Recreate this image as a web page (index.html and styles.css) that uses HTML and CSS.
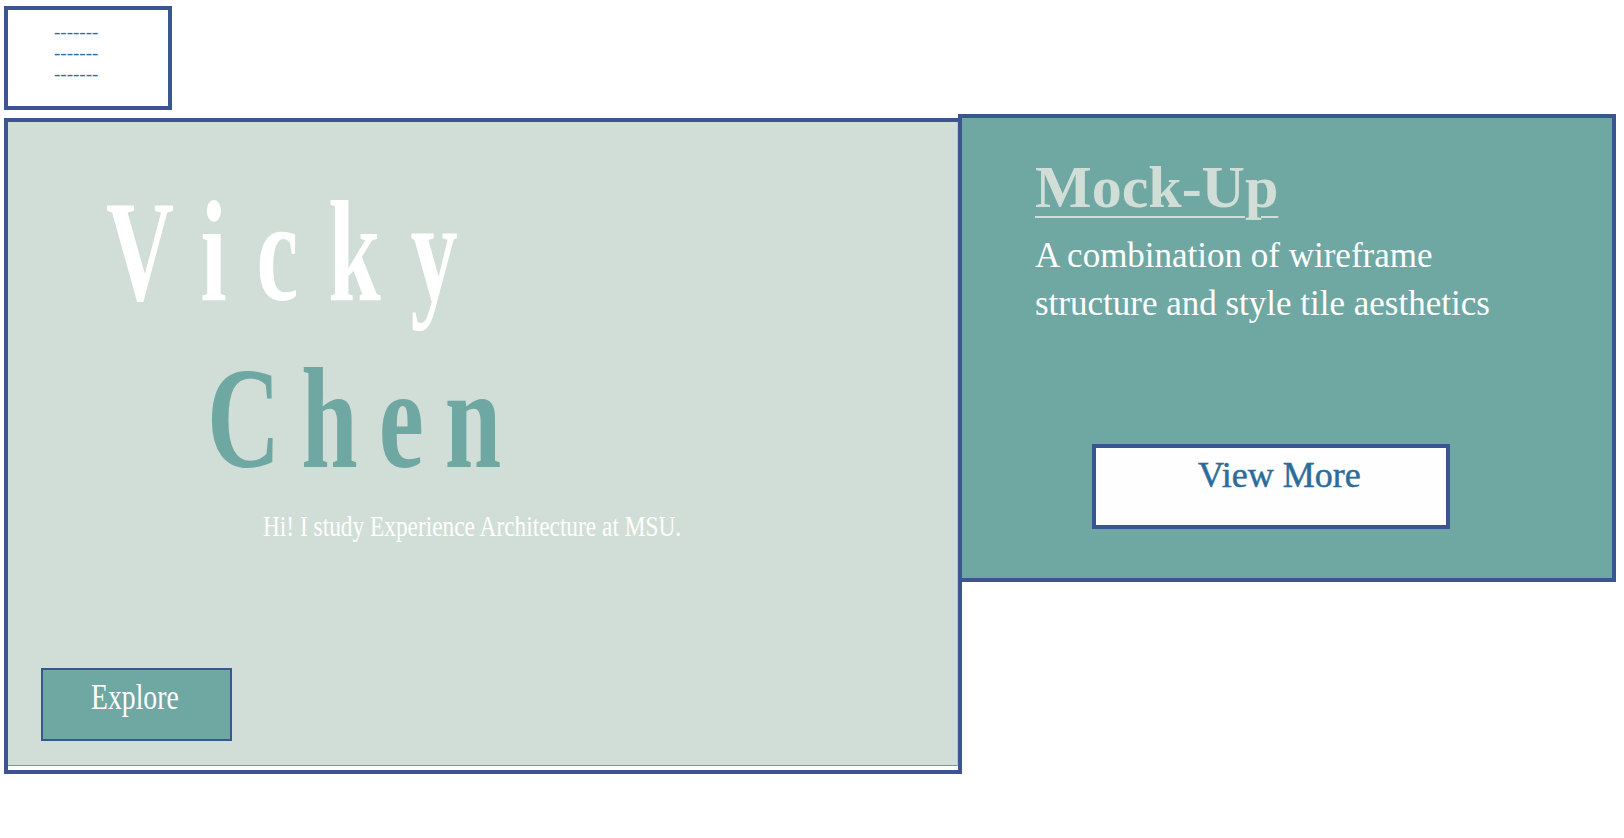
FILE: index.html
```html
<!DOCTYPE html>
<html lang="en">
<head>
<meta charset="utf-8">
<title>Vicky Chen</title>
<link rel="stylesheet" href="styles.css">
</head>
<body>
<div class="page">
  <nav class="menu">
    <a class="menu-link" href="#">-------</a>
    <a class="menu-link" href="#">-------</a>
    <a class="menu-link" href="#">-------</a>
  </nav>
  <div class="row">
    <section class="hero">
      <div class="hero-inner">
        <h1 class="name name-first"><span class="narrow">Vicky</span></h1>
        <h1 class="name name-last"><span class="narrow">Chen</span></h1>
        <p class="intro"><span class="narrow">Hi! I study Experience Architecture at MSU.</span></p>
        <a class="explore" href="#"><span class="narrow">Explore</span></a>
      </div>
    </section>
    <section class="card">
      <h2 class="card-title">Mock-Up</h2>
      <p class="card-text">A combination of wireframe<br>structure and style tile aesthetics</p>
      <a class="more" href="#">View More</a>
    </section>
  </div>
</div>
</body>
</html>
```

FILE: styles.css
```css
* { box-sizing: border-box; }

body {
  margin: 0;
  background: #ffffff;
  font-family: "Liberation Serif", "Times New Roman", serif;
}

.page {
  padding: 6px 0 0 4px;
}

.narrow {
  display: inline-block;
  white-space: nowrap;
  transform-origin: 0 0;
}

/* top-left menu */
.menu {
  width: 168px;
  height: 104px;
  border: 4px solid #3a558f;
  display: flex;
  flex-direction: column;
  padding: 11px 0 0 46px;
}

.menu-link {
  font-size: 19px;
  line-height: 21px;
  color: #2f6fa0;
  text-decoration: none;
}

/* main row */
.row {
  display: flex;
  align-items: flex-start;
  margin-top: 8px;
}

.hero {
  width: 958px;
  height: 656px;
  border: 4px solid #3a558f;
  background: #ffffff;
  flex: none;
}

.hero-inner {
  height: 644px;
  background: #d1ded7;
  border-bottom: 1px solid #7d90ad;
  border-right: 1px solid #b9c8c6;
  display: flex;
  flex-direction: column;
  align-items: flex-start;
}

.name {
  margin: 0;
  font-size: 145px;
  line-height: 145px;
  font-weight: bold;
}

.name-first {
  margin-top: 57px;
  padding-left: 98px;
  color: #ffffff;
  letter-spacing: 46px;
}

.name-first .narrow { transform: scaleX(0.65); }

.name-last {
  margin-top: 22px;
  padding-left: 199px;
  color: #6fa7a3;
  letter-spacing: 30px;
}

.name-last .narrow { transform: scaleX(0.70); }

.intro {
  margin: 21px 0 0;
  padding-left: 255px;
  font-size: 29px;
  line-height: 29px;
  color: #ffffff;
}

.intro .narrow { transform: scaleX(0.805); }

.explore {
  margin-top: 127px;
  margin-left: 33px;
  width: 191px;
  height: 73px;
  border: 2px solid #3a558f;
  background: #6fa7a3;
  color: #ffffff;
  font-size: 36px;
  line-height: 36px;
  padding: 9px 0 0 48px;
  text-decoration: none;
}

.explore .narrow { transform: scaleX(0.77); }

/* right card */
.card {
  flex: none;
  width: 658px;
  height: 468px;
  margin-left: -4px;
  margin-top: -4px;
  border: 4px solid #3a558f;
  background: #6fa7a3;
  padding: 39px 0 0 73px;
  display: flex;
  flex-direction: column;
  align-items: flex-start;
}

.card-title {
  margin: 0;
  font-size: 60px;
  line-height: 60px;
  font-weight: bold;
  color: #d1ded7;
  text-decoration: underline;
  text-decoration-thickness: 2px;
  text-underline-offset: 9px;
}

.card-text {
  margin: 15px 0 0;
  font-size: 35px;
  line-height: 48px;
  color: #ffffff;
}

.more {
  margin-top: 116px;
  margin-left: 57px;
  width: 358px;
  height: 85px;
  border: 4px solid #3a558f;
  background: #fdfefd;
  color: #2d6c9a;
  font-size: 36px;
  line-height: 36px;
  padding: 9px 0 0 102px;
  text-decoration: none;
  -webkit-text-stroke: 0.5px #2d6c9a;
}
```
